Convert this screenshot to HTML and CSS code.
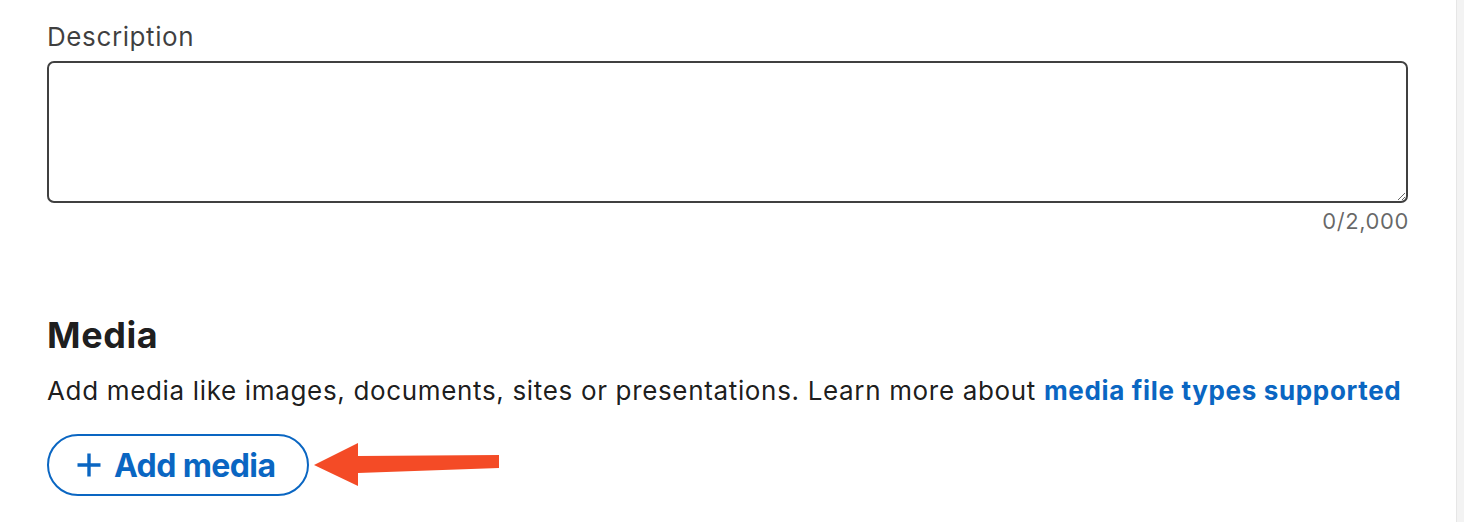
FILE: index.html
```html
<!DOCTYPE html>
<html lang="en">
<head>
<meta charset="utf-8">
<title>Media</title>
<link rel="stylesheet" href="styles.css">
</head>
<body>
<div class="page">
  <main class="content">
    <section class="field">
      <label class="field-label" for="desc">Description</label>
      <textarea id="desc" class="field-textarea"></textarea>
      <div class="field-counter">0/2,000</div>
    </section>
    <section class="media">
      <h2 class="media-title">Media</h2>
      <p class="media-text">Add media like images, documents, sites or presentations. Learn more about <a class="media-link" href="#">media file types supported</a></p>
      <div class="media-actions">
        <button class="btn-add" type="button">
          <svg class="btn-plus" width="24" height="24" viewBox="0 0 24 24" aria-hidden="true"><path d="M12 0.5v23M0.5 12h23" stroke="currentColor" stroke-width="3.4" fill="none"/></svg>
          <span>Add media</span>
        </button>
        <svg class="arrow" width="187" height="44" viewBox="0 0 187 44" aria-hidden="true"><path d="M1 22 L45 0 L45 13 L186 12 L186 25 L45 30 L45 43 Z" fill="#f44b26"/></svg>
      </div>
    </section>
  </main>
  <div class="scrollbar"></div>
</div>
</body>
</html>
```
FILE: styles.css
```css
html, body {
  margin: 0;
  padding: 0;
  background: #ffffff;
}
body {
  font-family: Inter, "Noto Sans", "Liberation Sans", sans-serif;
  color: rgba(0, 0, 0, 0.9);
}
.page {
  display: flex;
  width: 1464px;
  height: 522px;
  overflow: hidden;
}
.content {
  flex: 1;
  padding: 19px 48px 0 47px;
}
.field {
  display: flex;
  flex-direction: column;
}
.field-label {
  font-size: 26px;
  line-height: 36px;
  letter-spacing: 0.6px;
  color: rgba(0, 0, 0, 0.75);
  margin-bottom: 6px;
}
.field-textarea {
  box-sizing: border-box;
  width: 100%;
  height: 142px;
  border: 2px solid #404040;
  border-radius: 7px;
  resize: vertical;
  font: inherit;
  margin: 0;
  padding: 8px 12px;
  background: #fff;
}
.field-counter {
  align-self: flex-end;
  font-size: 22px;
  line-height: 33px;
  letter-spacing: 0.6px;
  color: rgba(0, 0, 0, 0.6);
  margin-top: 2px;
  margin-right: -1px;
}
.media {
  margin-top: 75px;
}
.media-title {
  margin: 0;
  font-size: 36px;
  line-height: 45px;
  letter-spacing: 0.6px;
  font-weight: 700;
  color: rgba(0, 0, 0, 0.9);
}
.media-text {
  margin: 15px 0 0;
  font-size: 26px;
  line-height: 36px;
  letter-spacing: 0.66px;
}
.media-link {
  color: #0a66c2;
  font-weight: 700;
  text-decoration: none;
}
.media-actions {
  display: flex;
  align-items: center;
  gap: 4px;
  margin-top: 25px;
}
.btn-add {
  box-sizing: border-box;
  display: inline-flex;
  align-items: center;
  gap: 13px;
  height: 62px;
  padding: 0 32px 0 28px;
  border: 2px solid #0a66c2;
  border-radius: 31px;
  background: #fff;
  color: #0a66c2;
  font-family: inherit;
  font-size: 32px;
  letter-spacing: -0.6px;
  font-weight: 700;
  cursor: pointer;
}
.btn-plus {
  display: block;
}
.arrow {
  display: block;
}
.scrollbar {
  width: 7px;
  background: #f3f3f3;
  border-left: 1px solid #e6e6e6;
}
```
